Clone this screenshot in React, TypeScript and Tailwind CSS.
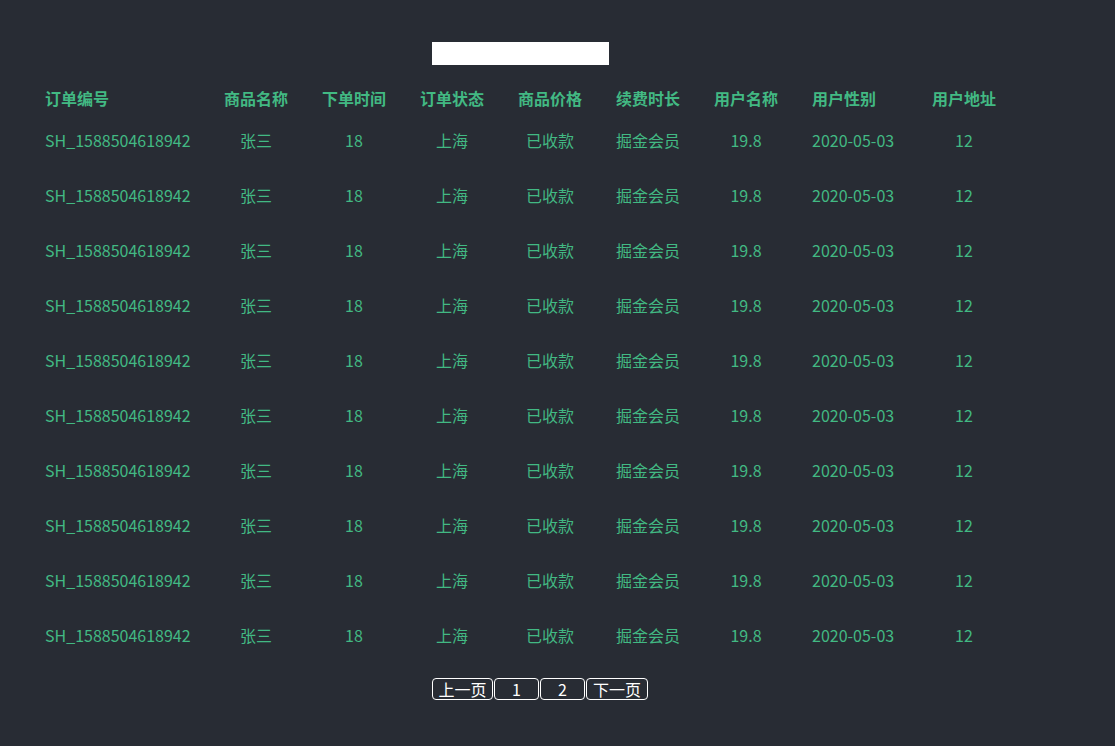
const cols = [
  { w: "w-[162px]", a: "text-left" },
  { w: "w-[98px]", a: "text-center" },
  { w: "w-[98px]", a: "text-center" },
  { w: "w-[98px]", a: "text-center" },
  { w: "w-[98px]", a: "text-center" },
  { w: "w-[98px]", a: "text-center" },
  { w: "w-[98px]", a: "text-center" },
  { w: "w-[120px]", a: "text-left pl-[17px]" },
  { w: "w-[98px]", a: "text-center" },
];

const headers = ["订单编号", "商品名称", "下单时间", "订单状态", "商品价格", "续费时长", "用户名称", "用户性别", "用户地址"];
const row = ["SH_1588504618942", "张三", "18", "上海", "已收款", "掘金会员", "19.8", "2020-05-03", "12"];

export default function App() {
  return (
    <div
      className="w-[1115px] h-[746px] bg-[#282c34] text-[#42b983] text-[16px] overflow-hidden"
      style={{ fontFamily: '"Noto Sans CJK SC", "Noto Sans", sans-serif' }}
    >
      <div className="pt-[42px] pl-[432px]">
        <div className="w-[177px] h-[23px] bg-white" />
      </div>
      <div className="pl-[45px] pt-[19px]">
        <div className="flex h-[28px] items-center font-bold">
          {headers.map((h, i) => (
            <div key={h} className={`${cols[i].w} ${cols[i].a}`}>{h}</div>
          ))}
        </div>
        {Array.from({ length: 10 }).map((_, r) => (
          <div key={r} className="flex items-center h-[55px]">
            {row.map((c, i) => (
              <div key={i} className={`${cols[i].w} ${cols[i].a}`}>{c}</div>
            ))}
          </div>
        ))}
      </div>
      <div className="flex gap-px pl-[432px] mt-[16px] text-white">
        {["上一页", "1", "2", "下一页"].map((p, i) => (
          <button
            key={p}
            className={`h-[22px] leading-[20px] border border-white rounded-[4px] text-[16px] ${i === 0 ? "w-[61px]" : i === 3 ? "w-[62px]" : "w-[45px]"}`}
          >
            {p}
          </button>
        ))}
      </div>
    </div>
  );
}
